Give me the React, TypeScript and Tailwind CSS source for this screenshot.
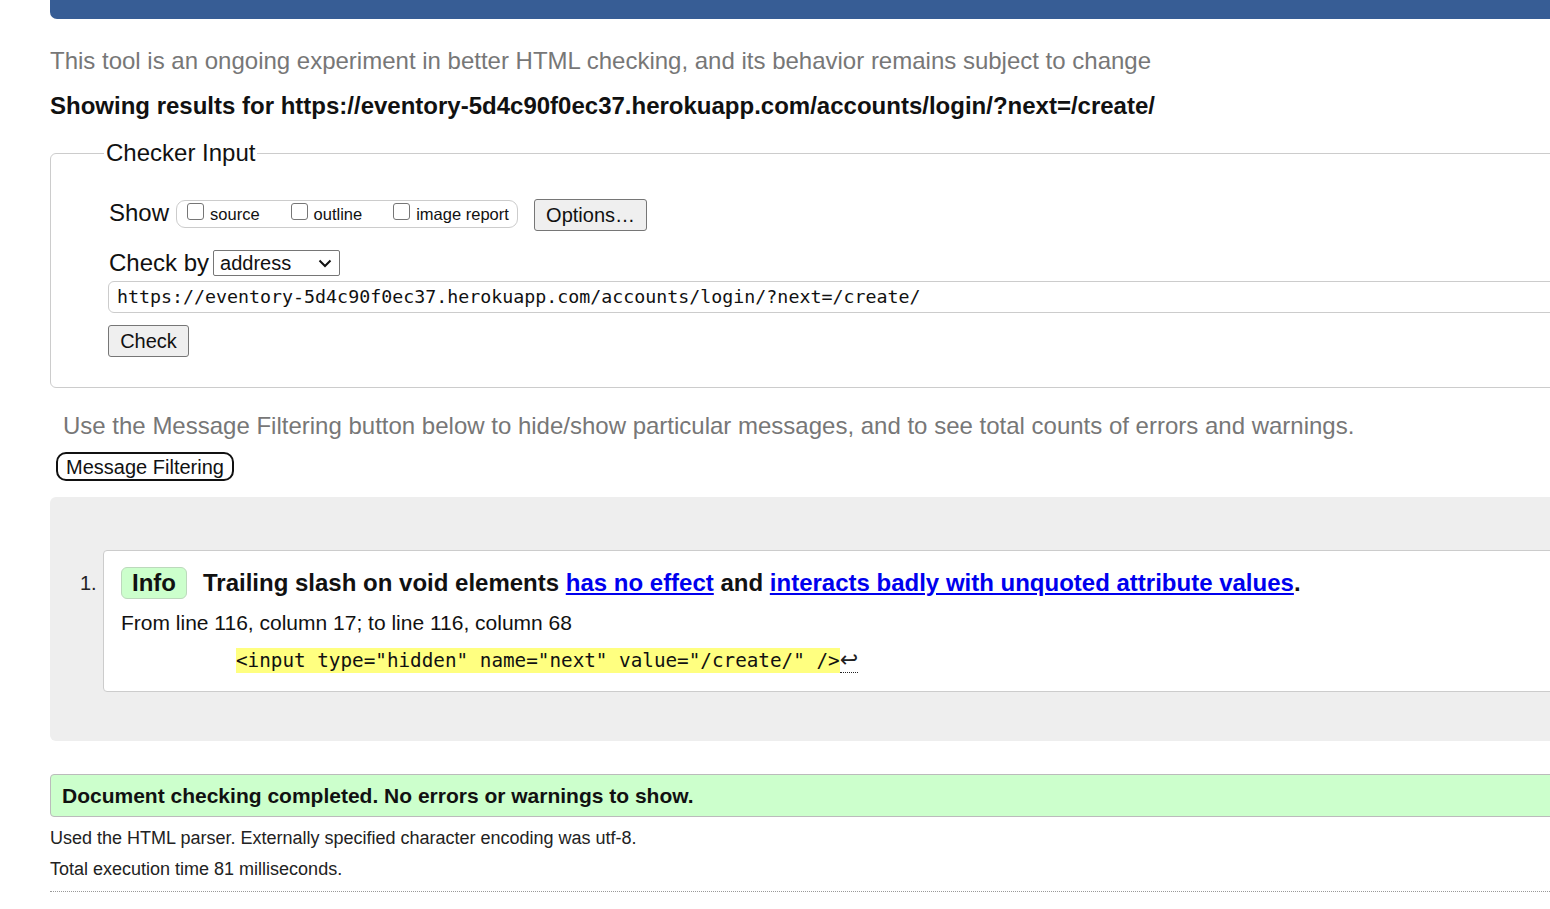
import React from "react";

const sans = "font-['Liberation_Sans',Arial,sans-serif]";
const mono = "font-['DejaVu_Sans_Mono',monospace]";

function Checkbox({ label }: { label: string }) {
  return (
    <label className="flex items-center">
      <span className="w-[17px] h-[17px] border border-[#767676] rounded-[3px] bg-white -mt-[4px]" />
      <span className="ml-[6px] text-[16.5px] leading-[20px] text-[#111]">{label}</span>
    </label>
  );
}

export default function App() {
  return (
    <div className={`w-[1550px] h-[909px] overflow-hidden bg-white text-[#222] ${sans}`}>
      <div className="ml-[50px] w-[1560px]">
        <div className="h-[19px] bg-[#375d95] rounded-bl-[7px]" />

        <p className="mt-[28px] text-[24px] leading-[28px] text-[#777]">
          This tool is an ongoing experiment in better HTML checking, and its behavior remains subject to change
        </p>
        <p className="mt-[17px] text-[24px] leading-[28px] font-bold text-[#111]">
          Showing results for https://eventory-5d4c90f0ec37.herokuapp.com/accounts/login/?next=/create/
        </p>

        <fieldset className="mt-[19px] border border-[#ccc] rounded-[6px] pl-[57px] pb-[30px]">
          <legend className="-ml-[4px] px-[2px] text-[24px] leading-[28px] text-[#111]">Checker Input</legend>

          <div className="mt-[31px] h-[33px] flex items-center">
            <span className="ml-[1px] -mt-[4px] text-[24px] leading-[28px] text-[#111]">Show</span>
            <div className="ml-[7px] -mt-[2px] h-[28px] w-[342px] border border-[#ccc] rounded-[9px] flex items-center pl-[10px] gap-[31px]">
              <Checkbox label="source" />
              <Checkbox label="outline" />
              <Checkbox label="image report" />
            </div>
            <button className="ml-[16px] h-[32px] w-[113px] bg-[#efefef] border border-[#767676] rounded-[3px] text-[20px] leading-[24px] text-[#111]">
              Options…
            </button>
          </div>

          <div className="mt-[18px] h-[28px] flex items-center">
            <span className="ml-[1px] text-[24px] leading-[28px] text-[#111]">Check by</span>
            <div className="ml-[4px] h-[26px] w-[127px] border border-[#767676] rounded-[2px] flex items-center justify-between pl-[6px] pr-[7px]">
              <span className="text-[20px] leading-[24px] text-[#111]">address</span>
              <svg width="14" height="9" viewBox="0 0 14 9" fill="none" stroke="#111" strokeWidth="2">
                <path d="M1.5 1.5 L7 7 L12.5 1.5" />
              </svg>
            </div>
          </div>

          <div className="mt-[4px] h-[32px] border border-[#ccc] rounded-[6px] flex items-center pl-[8px]">
            <span className={`${mono} text-[18.3px] leading-[22px] text-[#111]`}>
              https://eventory-5d4c90f0ec37.herokuapp.com/accounts/login/?next=/create/
            </span>
          </div>

          <button className="mt-[12px] h-[32px] w-[81px] bg-[#efefef] border border-[#767676] rounded-[3px] text-[20px] leading-[24px] text-[#111]">
            Check
          </button>
        </fieldset>

        <p className="mt-[24px] pl-[13px] text-[24px] leading-[28px] text-[#777]">
          Use the Message Filtering button below to hide/show particular messages, and to see total counts of errors and warnings.
        </p>
        <button className="mt-[12px] ml-[6px] h-[29px] w-[178px] border-2 border-[#111] rounded-[10px] text-[20px] leading-[22px] text-[#111] bg-white">
          Message Filtering
        </button>

        <div className="mt-[16px] bg-[#eee] rounded-[6px] pt-[53px] pb-[49px] pl-[30px] flex">
          <span className="w-[23px] pt-[21px] text-[20px] leading-[24px] text-[#222]">1.</span>
          <div className="flex-1 bg-white border border-[#ccc] rounded-l-[4px] pl-[17px] pt-[16px] pb-[18px]">
            <div className="flex items-center h-[32px]">
              <span className="h-[32px] px-[10px] bg-[#ccffcc] border border-[#bcd9bc] rounded-[6px] text-[24px] leading-[30px] font-bold text-[#111]">
                Info
              </span>
              <span className="ml-[16px] text-[24px] leading-[28px] font-bold text-[#111]">
                Trailing slash on void elements{" "}
                <a className="text-[#0000ee] underline">has no effect</a> and{" "}
                <a className="text-[#0000ee] underline">interacts badly with unquoted attribute values</a>.
              </span>
            </div>
            <p className="mt-[12px] text-[21px] leading-[24px] text-[#111]">
              From line 116, column 17; to line 116, column 68
            </p>
            <div className="mt-[13px] ml-[115px] flex items-start h-[25px]">
              <code className={`${mono} bg-[#ffff80] text-[19.3px] leading-[25px] text-[#111]`}>
                {'<input type="hidden" name="next" value="/create/" />'}
              </code>
              <span className="font-['DejaVu_Sans',sans-serif] text-[22px] leading-[24px] text-[#222] border-b border-dotted border-[#222]">
                ↩
              </span>
            </div>
          </div>
        </div>

        <div className="mt-[33px] h-[43px] bg-[#ccffcc] border border-[#bbb] rounded-l-[4px] flex items-center pl-[11px]">
          <span className="text-[21px] leading-[24px] font-bold text-[#111]">
            Document checking completed. No errors or warnings to show.
          </span>
        </div>

        <p className="mt-[10px] text-[18px] leading-[22px] text-[#222]">
          Used the HTML parser. Externally specified character encoding was utf-8.
        </p>
        <p className="mt-[9px] text-[18px] leading-[22px] text-[#222]">Total execution time 81 milliseconds.</p>
        <div className="mt-[11px] border-t border-dotted border-[#999]" />
      </div>
    </div>
  );
}
